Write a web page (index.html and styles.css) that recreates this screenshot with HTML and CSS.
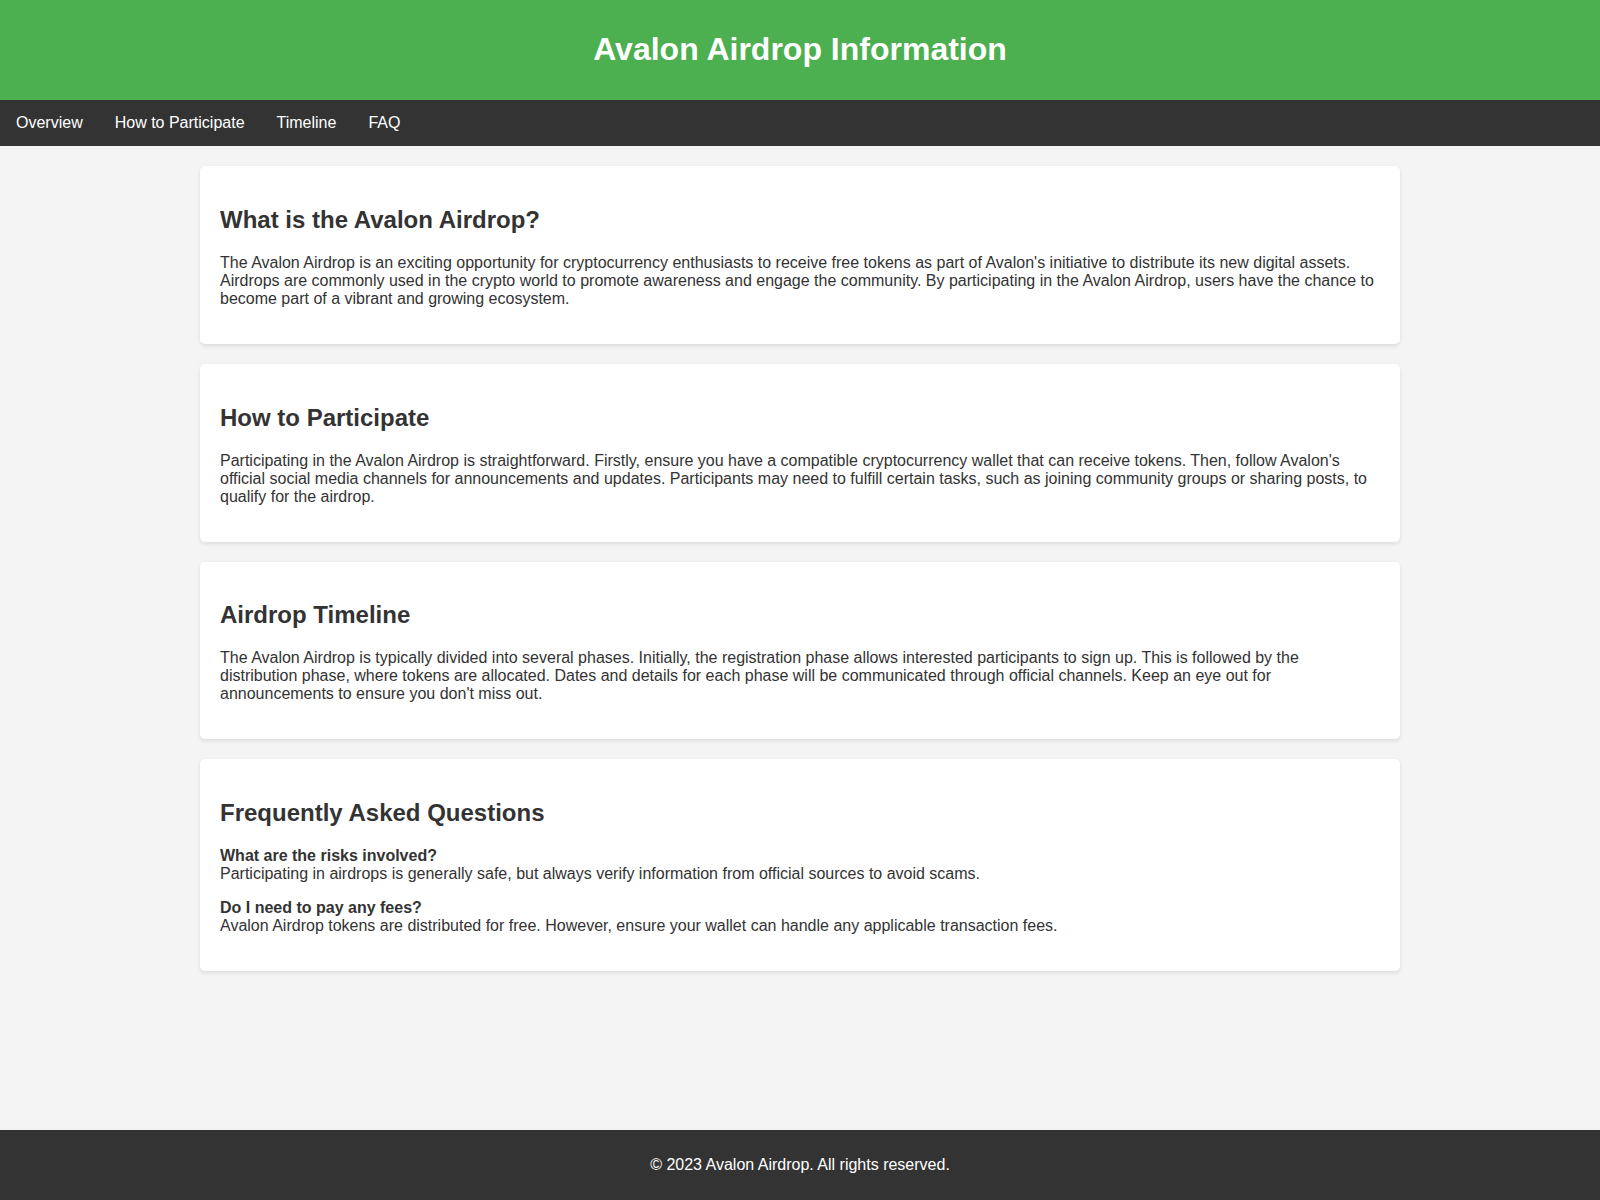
FILE: index.html
```html
<!DOCTYPE html>
<html lang="en">
<head>
<meta charset="UTF-8">
<title>Avalon Airdrop Information</title>
<link rel="stylesheet" href="styles.css">
</head>
<body>
<header class="site-header">
  <h1>Avalon Airdrop Information</h1>
</header>
<nav class="site-nav">
  <a href="#overview">Overview</a>
  <a href="#participate">How to Participate</a>
  <a href="#timeline">Timeline</a>
  <a href="#faq">FAQ</a>
</nav>
<main class="content">
  <section class="card" id="overview">
    <h2>What is the Avalon Airdrop?</h2>
    <p>The Avalon Airdrop is an exciting opportunity for cryptocurrency enthusiasts to receive free tokens as part of Avalon's initiative to distribute its new digital assets. Airdrops are commonly used in the crypto world to promote awareness and engage the community. By participating in the Avalon Airdrop, users have the chance to become part of a vibrant and growing ecosystem.</p>
  </section>
  <section class="card" id="participate">
    <h2>How to Participate</h2>
    <p>Participating in the Avalon Airdrop is straightforward. Firstly, ensure you have a compatible cryptocurrency wallet that can receive tokens. Then, follow Avalon's official social media channels for announcements and updates. Participants may need to fulfill certain tasks, such as joining community groups or sharing posts, to qualify for the airdrop.</p>
  </section>
  <section class="card" id="timeline">
    <h2>Airdrop Timeline</h2>
    <p>The Avalon Airdrop is typically divided into several phases. Initially, the registration phase allows interested participants to sign up. This is followed by the distribution phase, where tokens are allocated. Dates and details for each phase will be communicated through official channels. Keep an eye out for announcements to ensure you don't miss out.</p>
  </section>
  <section class="card" id="faq">
    <h2>Frequently Asked Questions</h2>
    <p><strong>What are the risks involved?</strong><br>Participating in airdrops is generally safe, but always verify information from official sources to avoid scams.</p>
    <p><strong>Do I need to pay any fees?</strong><br>Avalon Airdrop tokens are distributed for free. However, ensure your wallet can handle any applicable transaction fees.</p>
  </section>
</main>
<footer class="site-footer">
  <p>&copy; 2023 Avalon Airdrop. All rights reserved.</p>
</footer>
</body>
</html>
```
FILE: styles.css
```css
html, body {
  margin: 0;
  padding: 0;
}

body {
  font-family: "Liberation Sans", Arial, sans-serif;
  font-size: 16px;
  color: #333;
  background: #f4f4f4;
  min-height: 100vh;
  display: flex;
  flex-direction: column;
}

.site-header {
  background: #4caf50;
  color: #fff;
  text-align: center;
  padding: 10px 0;
}

.site-header h1 {
  font-size: 32px;
  margin: 0.67em 0;
}

.site-nav {
  background: #333;
  display: flex;
}

.site-nav a {
  color: #fff;
  text-decoration: none;
  padding: 14px 16px;
}

.content {
  flex: 1;
  width: 100%;
  max-width: 1200px;
  margin: 20px auto;
  box-sizing: border-box;
}

.card {
  background: #fff;
  border-radius: 5px;
  box-shadow: 0 2px 4px rgba(0, 0, 0, 0.1);
  padding: 20px;
  margin-bottom: 20px;
}

.card:last-child {
  margin-bottom: 0;
}

.card h2 {
  font-size: 24px;
  margin: 0.83em 0;
}

.card p {
  margin: 16px 0;
}

.site-footer {
  background: #333;
  color: #fff;
  text-align: center;
  padding: 10px 0;
}

.site-footer p {
  margin: 16px 0;
}
```
